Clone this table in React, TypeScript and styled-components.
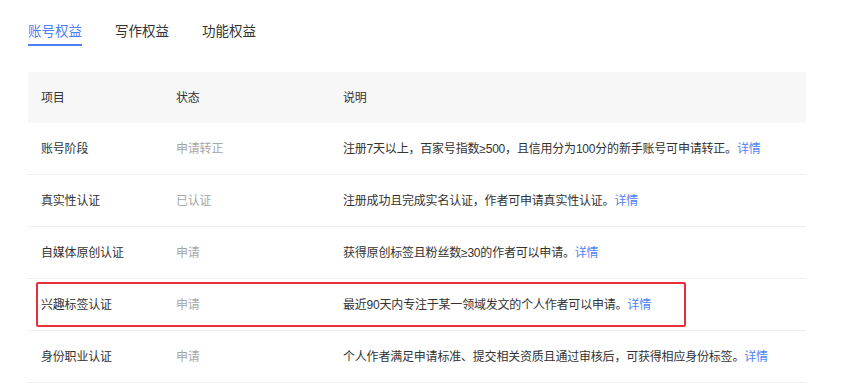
import React from 'react';
import styled, { createGlobalStyle } from 'styled-components';

const GlobalStyle = createGlobalStyle`
  html, body {
    margin: 0;
    padding: 0;
    background: #fff;
  }
  body {
    font-family: "Noto Sans CJK SC", "Noto Sans", sans-serif;
    color: #333;
  }
`;

interface IRight {
  name: string
  status: string
  desc: string
  marked?: boolean
}

const rights: IRight[] = [
  { name: '账号阶段', status: '申请转正', desc: '注册7天以上，百家号指数≥500，且信用分为100分的新手账号可申请转正。' },
  { name: '真实性认证', status: '已认证', desc: '注册成功且完成实名认证，作者可申请真实性认证。' },
  { name: '自媒体原创认证', status: '申请', desc: '获得原创标签且粉丝数≥30的作者可以申请。' },
  { name: '兴趣标签认证', status: '申请', desc: '最近90天内专注于某一领域发文的个人作者可以申请。', marked: true },
  { name: '身份职业认证', status: '申请', desc: '个人作者满足申请标准、提交相关资质且通过审核后，可获得相应身份标签。' }
];

const tabs = ['账号权益', '写作权益', '功能权益'];

const Page = styled.div`
  padding: 20px 58px 0 28px;
`;

const Tabs = styled.div`
  display: flex;
  gap: 33px;
`;

const Tab = styled.div<{ $active?: boolean }>`
  font-size: 13.5px;
  line-height: 20px;
  padding-bottom: 4px;
  border-bottom: 2px solid ${props => (props.$active ? '#4e7ff6' : 'transparent')};
  color: ${props => (props.$active ? '#4e7ff6' : '#333')};
  cursor: pointer;
`;

const Table = styled.div`
  margin-top: 26px;
  width: 778px;
`;

const Row = styled.div<{ $head?: boolean }>`
  position: relative;
  display: grid;
  grid-template-columns: 135px 167px 1fr;
  align-items: center;
  padding-left: 13px;
  height: 51px;
  background: ${props => (props.$head ? '#f7f7f7' : '#fff')};
  border-bottom: ${props => (props.$head ? 'none' : '1px solid #efefef')};
  font-family: "Liberation Sans", "Noto Sans CJK SC", sans-serif;
  font-size: 12px;
  line-height: 18px;
  letter-spacing: -0.2px;
`;

const Name = styled.span`
  color: #333;
`;

const Status = styled.span<{ $head?: boolean }>`
  color: ${props => (props.$head ? '#333' : '#a6a6a6')};
`;

const Desc = styled.span`
  color: #333;
`;

const Detail = styled.a`
  color: #4e7ff6;
  text-decoration: none;
  cursor: pointer;
`;

const MarkBox = styled.div`
  position: absolute;
  left: 8px;
  top: 3px;
  width: 650px;
  height: 45px;
  box-sizing: border-box;
  border: 2px solid #ea2f38;
  border-radius: 2px;
  pointer-events: none;
`;

const App = () => {
  return (
    <Page>
      <GlobalStyle />
      <Tabs>
        {tabs.map((t, i) => (
          <Tab key={t} $active={i === 0}>
            {t}
          </Tab>
        ))}
      </Tabs>
      <Table>
        <Row $head>
          <Name>项目</Name>
          <Status $head>状态</Status>
          <Desc>说明</Desc>
        </Row>
        {rights.map(r => (
          <Row key={r.name}>
            <Name>{r.name}</Name>
            <Status>{r.status}</Status>
            <Desc>
              {r.desc}
              <Detail>详情</Detail>
            </Desc>
            {r.marked && <MarkBox />}
          </Row>
        ))}
      </Table>
    </Page>
  );
};

export default App;
